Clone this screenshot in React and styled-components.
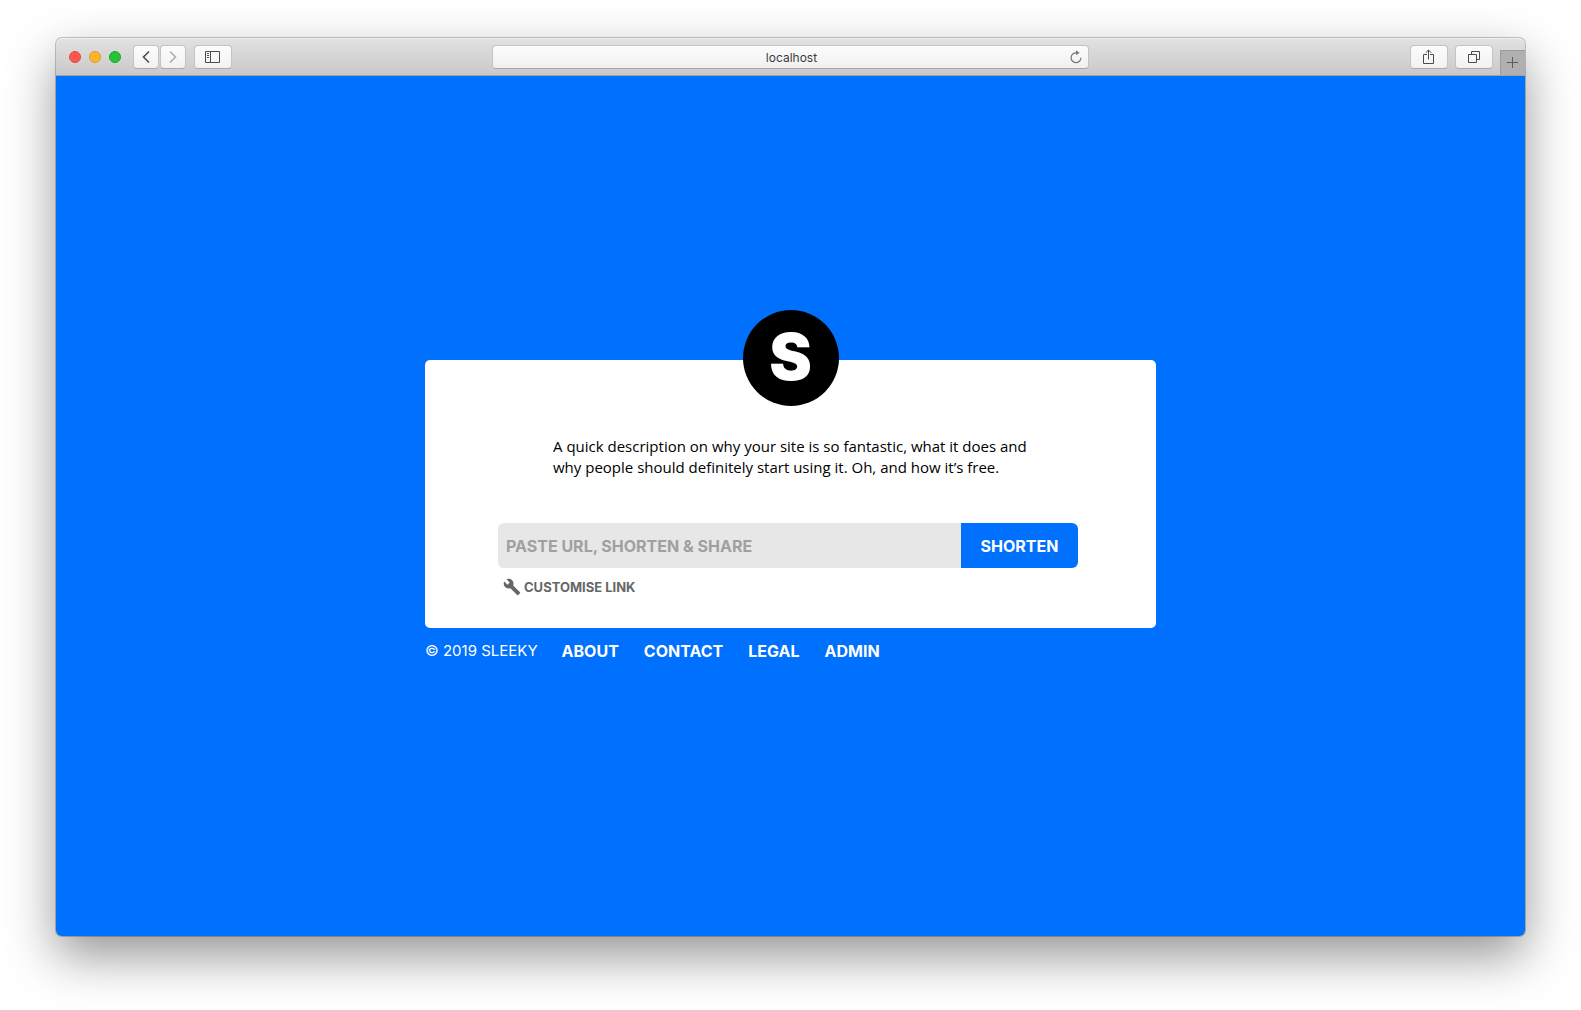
import React from "react";
import styled, { createGlobalStyle } from "styled-components";
import { MdBuild } from "react-icons/md";

const BLUE = "#0070ff";

const GlobalStyle = createGlobalStyle`
  *, *::before, *::after { box-sizing: border-box; }
  body {
    margin: 0;
    background: #fff;
    font-family: Inter, "Liberation Sans", sans-serif;
  }
  button, input { font-family: inherit; }
`;

const Desktop = styled.div`
  min-height: 100vh;
  padding: 38px 56px 74px;
  display: flex;
`;

const BrowserWindow = styled.div`
  flex: 1;
  min-width: 0;
  display: flex;
  flex-direction: column;
  border-radius: 6px;
  background: ${BLUE};
  box-shadow:
    0 0 0 1px rgba(0, 0, 0, 0.22),
    0 20px 50px rgba(0, 0, 0, 0.42);
`;

const Toolbar = styled.header`
  height: 38px;
  display: grid;
  grid-template-columns: 1fr minmax(0, 597px) 1fr;
  align-items: center;
  border-radius: 6px 6px 0 0;
  border-bottom: 1px solid #a3a3a3;
  background: linear-gradient(#e2e2e2, #c9c9c9);
  box-shadow: inset 0 1px 0 #f2f2f2;
`;

const StartTools = styled.div`
  display: flex;
  align-items: center;
  padding-left: 13px;
`;

const Lights = styled.div`
  display: flex;
  gap: 8px;
  margin-right: 12px;
`;

const Light = styled.button`
  width: 12px;
  height: 12px;
  padding: 0;
  border: 1px solid ${(p) => p.$edge};
  border-radius: 50%;
  background: ${(p) => p.$fill};
`;

const History = styled.div`
  display: flex;
  gap: 1px;
  margin-right: 8px;
`;

const ToolButton = styled.button`
  width: ${(p) => (p.$narrow ? "26px" : "38px")};
  height: 24px;
  padding: 0;
  display: flex;
  align-items: center;
  justify-content: center;
  border: 1px solid #c3c3c3;
  border-bottom-color: #aaa;
  border-radius: 4px;
  background: linear-gradient(#fdfdfd, #f1f1f1);
  color: ${(p) => (p.$faded ? "#ababab" : "#4c4c4c")};
`;

const AddressBar = styled.div`
  position: relative;
  height: 24px;
  border: 1px solid #c3c3c3;
  border-bottom-color: #a6a6a6;
  border-radius: 4px;
  background: linear-gradient(#fcfcfc, #f0f0f0);
`;

const AddressInput = styled.input`
  width: 100%;
  height: 22px;
  padding: 0 26px 0 28px;
  border: 0;
  background: transparent;
  color: #3c3c3c;
  font-size: 12px;
  text-align: center;
`;

const Reload = styled.button`
  position: absolute;
  top: 0;
  right: 3px;
  width: 18px;
  height: 22px;
  padding: 0;
  display: flex;
  align-items: center;
  justify-content: center;
  border: 0;
  background: transparent;
  color: #777;
`;

const EndTools = styled.div`
  align-self: stretch;
  display: flex;
  align-items: center;
  justify-content: flex-end;
  gap: 7px;
`;

const NewTab = styled.button`
  align-self: flex-end;
  width: 25px;
  height: 25px;
  padding: 0;
  display: flex;
  align-items: center;
  justify-content: center;
  border: 0;
  border-top: 1px solid #9c9c9c;
  border-left: 1px solid #9c9c9c;
  background: #b0b0b0;
  color: #5c5c5c;
`;

const Page = styled.main`
  flex: 1;
  display: flex;
  align-items: center;
  justify-content: center;
  padding: 10px 16px 0;
`;

const Content = styled.div`
  width: 100%;
  max-width: 731px;
`;

const Card = styled.section`
  display: flex;
  flex-direction: column;
  padding: 0 78px 32px 73px;
  border-radius: 5px;
  background: #fff;
`;

const LogoSlot = styled.div`
  display: flex;
  justify-content: center;
  padding-left: 5px;
`;

const Logo = styled.div`
  width: 96px;
  height: 96px;
  margin-top: -50px;
  padding-bottom: 2px;
  display: flex;
  align-items: center;
  justify-content: center;
  border-radius: 50%;
  background: #000;
  color: #fff;
  font: 900 64px/92px Inter, sans-serif;
`;

const Description = styled.p`
  margin: 30px 50px 45px 55px;
  color: #000;
  font: 400 15px/21px "Open Sans", sans-serif;
`;

const ShortenForm = styled.form`
  display: flex;
  flex-direction: column;
  align-items: flex-start;
`;

const Field = styled.div`
  width: 100%;
  height: 45px;
  display: flex;
  border-radius: 6px;
  overflow: hidden;
`;

const UrlInput = styled.input`
  flex: 1;
  min-width: 0;
  padding: 0 8px;
  border: 0;
  background: #e7e7e7;
  color: #444;
  font-size: 16px;
  font-weight: 700;
  &::placeholder { color: #a0a0a0; opacity: 1; }
`;

const Submit = styled.button`
  width: 117px;
  padding: 0;
  border: 0;
  background: ${BLUE};
  color: #fff;
  font-size: 16px;
  font-weight: 700;
`;

const Customise = styled.button`
  display: flex;
  align-items: center;
  gap: 3px;
  height: 18px;
  margin-top: 10px;
  padding: 0 0 0 5px;
  border: 0;
  background: transparent;
  color: #666;
  font-size: 13px;
  font-weight: 700;
`;

const Footer = styled.footer`
  display: flex;
  flex-wrap: wrap;
  gap: 24px;
  padding-top: 12px;
  color: #fff;
  font-size: 15px;
  line-height: 22px;
`;

const FooterNav = styled.nav`
  display: flex;
  flex-wrap: wrap;
  gap: 25px;
  font-size: 16px;
`;

const FooterLink = styled.a`
  color: #fff;
  font-weight: 700;
  text-decoration: none;
`;

const Line = ({ w, h, children, stroke = 1 }) => (
  <svg width={w} height={h} viewBox={`0 0 ${w} ${h}`} fill="none" stroke="currentColor" strokeWidth={stroke} aria-hidden="true">
    {children}
  </svg>
);

const lights = [
  { name: "Close", fill: "#ff5650", edge: "#e2463f" },
  { name: "Minimise", fill: "#fdb42c", edge: "#e09b22" },
  { name: "Zoom", fill: "#25c438", edge: "#1ba62b" },
];

const links = ["About", "Contact", "Legal", "Admin"];

export default function App() {
  return (
    <>
      <GlobalStyle />
      <Desktop>
        <BrowserWindow>
          <Toolbar>
            <StartTools>
              <Lights>
                {lights.map((l) => (
                  <Light key={l.name} type="button" aria-label={l.name} $fill={l.fill} $edge={l.edge} />
                ))}
              </Lights>
              <History>
                <ToolButton type="button" $narrow aria-label="Back">
                  <Line w={8} h={14} stroke={1.6}><path d="M7 1.5 1.5 7 7 12.5" /></Line>
                </ToolButton>
                <ToolButton type="button" $narrow $faded aria-label="Forward">
                  <Line w={8} h={14} stroke={1.6}><path d="M1 1.5 6.5 7 1 12.5" /></Line>
                </ToolButton>
              </History>
              <ToolButton type="button" aria-label="Show sidebar">
                <Line w={16} h={12}>
                  <path d="M.5.5h14v11H.5zM5.5.5v11M2 2.5h2M2 4.5h2M2 6.5h2" />
                </Line>
              </ToolButton>
            </StartTools>
            <AddressBar>
              <AddressInput aria-label="Address" defaultValue="localhost" />
              <Reload type="button" aria-label="Reload">
                <Line w={12} h={14} stroke={1.2}>
                  <path d="M6.4 2.8A4.9 4.9 0 1 0 10.9 7.7" />
                  <path d="M6 .3v5L9.6 2.8z" fill="currentColor" stroke="none" />
                </Line>
              </Reload>
            </AddressBar>
            <EndTools>
              <ToolButton type="button" aria-label="Share">
                <Line w={12} h={16}>
                  <path d="M4 5.5H.5v9h10v-9H7M5.5 10.5V1M2.7 3.8 5.5 1l2.8 2.8" />
                </Line>
              </ToolButton>
              <ToolButton type="button" aria-label="Show all tabs">
                <Line w={12} h={12}>
                  <path d="M.5 3.5h8v8h-8zM3.5 3.5v-3h8v8h-3" />
                </Line>
              </ToolButton>
              <NewTab type="button" aria-label="New tab">
                <Line w={12} h={12}><path d="M5.5 0v11M0 5.5h11" /></Line>
              </NewTab>
            </EndTools>
          </Toolbar>
          <Page>
            <Content>
              <Card>
                <LogoSlot>
                  <Logo>S</Logo>
                </LogoSlot>
                <Description>
                  A quick description on why your site is so fantastic, what it does and why people should definitely
                  start using it. Oh, and how it’s free.
                </Description>
                <ShortenForm onSubmit={(e) => e.preventDefault()}>
                  <Field>
                    <UrlInput type="text" aria-label="URL to shorten" placeholder="PASTE URL, SHORTEN &amp; SHARE" />
                    <Submit type="submit">SHORTEN</Submit>
                  </Field>
                  <Customise type="button">
                    <MdBuild size={18} aria-hidden="true" />
                    CUSTOMISE LINK
                  </Customise>
                </ShortenForm>
              </Card>
              <Footer>
                <span>© 2019 SLEEKY</span>
                <FooterNav aria-label="Footer">
                  {links.map((name) => (
                    <FooterLink key={name} href={`#${name.toLowerCase()}`}>{name.toUpperCase()}</FooterLink>
                  ))}
                </FooterNav>
              </Footer>
            </Content>
          </Page>
        </BrowserWindow>
      </Desktop>
    </>
  );
}
